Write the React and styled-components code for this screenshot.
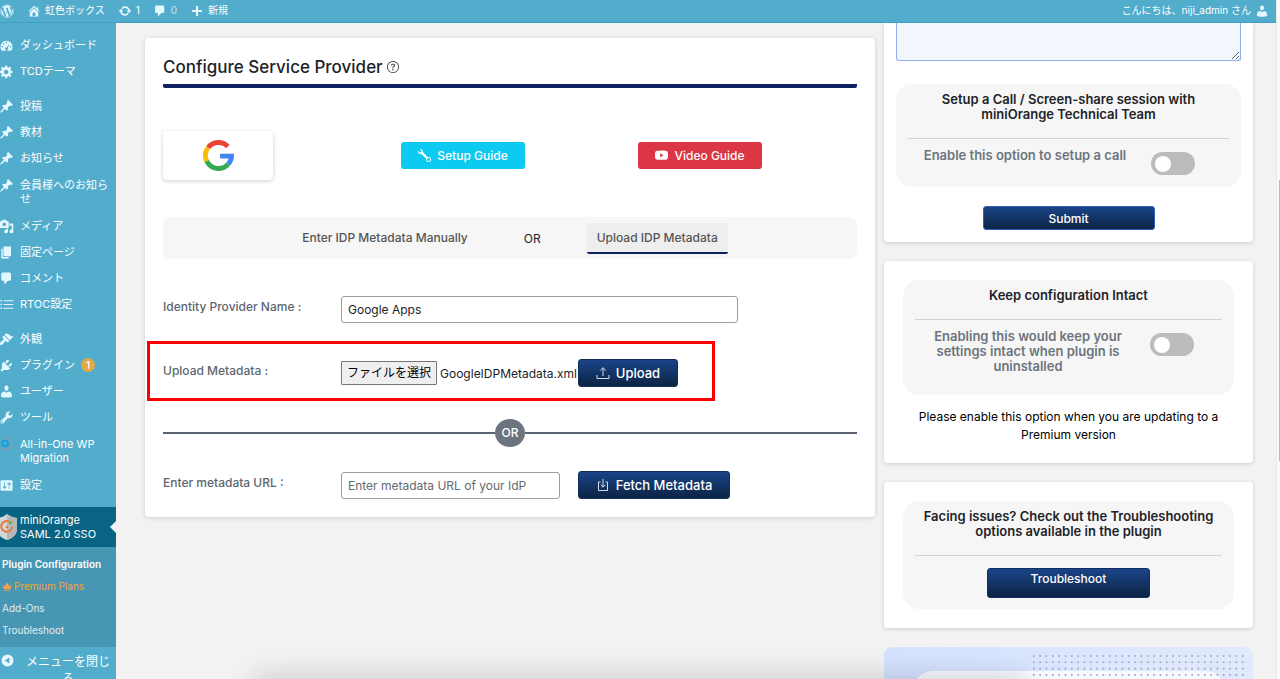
import React, { useState } from 'react';
import styled, { createGlobalStyle, css } from 'styled-components';
import { FaWordpress } from 'react-icons/fa';
import { BsQuestionCircle, BsWrench, BsYoutube } from 'react-icons/bs';

const COLORS = {
    ADMIN: '#52accc',
    ADMIN_LINE: '#3f9ec0',
    CURRENT: '#096484',
    SUBMENU: '#4796b3',
    ICON: '#e5f8ff',
    NAVY: '#0f2260',
    TEXT: '#1d2327',
    LABEL: '#5c6670',
    PAGE: '#f2f2f2',
    PANEL: '#f6f6f6',
    BADGE: '#e1a948',
};

const ICONS = {
    home: 'M16 8.5l1.53 1.53-1.06 1.06L10 4.6l-6.47 6.49-1.06-1.06L10 2.5l4 4v-2h2v4zm-6-2.46l6 5.99V18H4v-5.97zM12 17v-5H8v5h4z',
    update: 'M10.2 3.28c3.53 0 6.43 2.61 6.92 6h2.08l-3.5 4-3.5-4h2.32c-.45-1.97-2.21-3.45-4.32-3.45-1.45 0-2.73.71-3.54 1.78L4.95 5.66C6.23 4.2 8.11 3.28 10.2 3.28zm-.4 13.44c-3.52 0-6.43-2.61-6.92-6H.8l3.5-4c1.17 1.33 2.33 2.67 3.5 4H5.48c.45 1.97 2.21 3.45 4.32 3.45 1.45 0 2.73-.71 3.54-1.78l1.71 1.95c-1.28 1.46-3.15 2.38-5.25 2.38z',
    comment: 'M5 2h9c1.1 0 2 .9 2 2v7c0 1.1-.9 2-2 2h-2l-5 5v-5H5c-1.1 0-2-.9-2-2V4c0-1.1.9-2 2-2z',
    plus: 'M17 8.5v3h-5.5V17h-3v-5.5H3v-3h5.5V3h3v5.5z',
    dashboard: 'M3.76 17h12.48A7.97 7.97 0 0 0 18 11.6a8 8 0 1 0-16 0c0 2 .66 3.9 1.76 5.4zM10 5a1.1 1.1 0 1 1 0 2.2A1.1 1.1 0 0 1 10 5zM6.1 6.6a1.1 1.1 0 1 1 0 2.2 1.1 1.1 0 0 1 0-2.2zm8.6.2l-2.9 6.6a2 2 0 1 1-1.6-.9zM4.5 10.4a1.1 1.1 0 1 1 0 2.2 1.1 1.1 0 0 1 0-2.2zm11 0a1.1 1.1 0 1 1 0 2.2 1.1 1.1 0 0 1 0-2.2z',
    gear: 'M18 12h-2.18c-.17.7-.44 1.35-.81 1.93l1.54 1.54-2.1 2.1-1.54-1.54c-.58.36-1.23.63-1.91.79V19H8v-2.18c-.68-.16-1.33-.43-1.91-.79l-1.54 1.54-2.12-2.12 1.54-1.54c-.36-.58-.63-1.23-.79-1.91H1V9.03h2.17c.16-.7.44-1.35.8-1.94L2.43 5.55l2.1-2.1 1.54 1.54c.58-.37 1.24-.64 1.93-.81V2h3v2.18c.68.16 1.33.43 1.91.79l1.54-1.54 2.12 2.12-1.54 1.54c.36.59.64 1.24.8 1.94H18V12zm-8.5 1.5c1.66 0 3-1.34 3-3s-1.34-3-3-3-3 1.34-3 3 1.34 3 3 3z',
    pin: 'M10.44 3.02l1.82-1.82 6.36 6.35-1.83 1.82c-1.05-.68-2.48-.57-3.41.36l-.75.75c-.92.93-1.04 2.35-.35 3.41l-1.83 1.82-2.41-2.41-2.8 2.79c-.42.42-3.38 2.71-3.8 2.29s1.86-3.39 2.28-3.81l2.79-2.79L4.1 9.36l1.83-1.82c1.05.69 2.48.57 3.4-.36l.75-.75c.93-.92 1.05-2.35.36-3.41z',
    media: 'M13 11V4c0-.55-.45-1-1-1h-1.67L9 1H5L3.67 3H2c-.55 0-1 .45-1 1v7c0 .55.45 1 1 1h10c.55 0 1-.45 1-1zM7 4.5c1.38 0 2.5 1.12 2.5 2.5S8.38 9.5 7 9.5 4.5 8.38 4.5 7 5.62 4.5 7 4.5zM14 6h5v10.5c0 1.38-1.12 2.5-2.5 2.5S14 17.88 14 16.5s1.12-2.5 2.5-2.5c.17 0 .34.02.5.05V9h-3V6zm-4 8.05V13h2v3.5c0 1.38-1.12 2.5-2.5 2.5S7 17.88 7 16.5 8.12 14 9.5 14c.17 0 .34.02.5.05z',
    page: 'M6 15V2h10v13H6zm-1 1h8v2H3V5h2v11z',
    list: 'M2 4h2v2H2zm4 .2h13v1.6H6zM2 9h2v2H2zm4 .2h13v1.6H6zM2 14h2v2H2zm4 .2h13v1.6H6z',
    brush: 'M14.48 11.06L7.41 3.99l1.5-1.5c.5-.56 2.3-.47 3.51.32 1.21.8 1.43 1.28 2.91 2.1 1.18.64 2.45 1.26 4.45.85zm-.71.71L6.7 4.7 4.93 6.47c-.39.39-.39 1.02 0 1.41l1.06 1.06c.39.39.39 1.03 0 1.42-.6.6-1.43 1.11-2.21 1.69-.35.26-.7.53-1.01.84C1.43 14.23.4 16.08 1.4 17.07c.99 1 2.84-.03 4.18-1.36.31-.31.58-.66.85-1.02.57-.78 1.08-1.61 1.69-2.21.39-.39 1.02-.39 1.41 0l1.06 1.06c.39.39 1.02.39 1.41 0z',
    plugin: 'M13.11 4.36L9.87 7.6 8 5.73l3.24-3.24c.35-.34 1.05-.2 1.56.32.52.51.66 1.21.31 1.55zm-8 1.77l.91-1.12 9.01 9.01-1.19.84c-.71.71-2.63 1.16-3.82 1.16H6.14L4.9 17.26c-.59.59-1.54.59-2.12 0-.59-.58-.59-1.53 0-2.12l1.24-1.24v-3.88c0-1.13.4-3.19 1.09-3.89zm7.26 3.97l3.24-3.24c.34-.35 1.04-.21 1.55.31.52.51.66 1.21.31 1.55l-3.24 3.25z',
    user: 'M10 9.25c-2.27 0-2.73-3.44-2.73-3.44C7 4.02 7.82 2 9.97 2c2.16 0 2.98 2.02 2.71 3.81 0 0-.41 3.44-2.68 3.44zm0 2.57L12.72 10c2.39 0 4.52 2.33 4.52 4.53v2.49s-3.65 1.13-7.24 1.13c-3.65 0-7.24-1.13-7.24-1.13v-2.49c0-2.25 1.94-4.48 4.47-4.48z',
    tools: 'M16.68 9.77c-1.34 1.34-3.3 1.67-4.95.99l-5.41 6.52c-.99.99-2.59.99-3.58 0s-.99-2.59 0-3.57l6.52-5.42c-.68-1.65-.35-3.61.99-4.95 1.28-1.28 3.12-1.62 4.72-1.06l-2.89 2.89 2.82 2.82 2.86-2.87c.53 1.58.18 3.39-1.08 4.65zM3.81 16.21c.4.39 1.04.39 1.43 0 .4-.4.4-1.04 0-1.43-.39-.4-1.03-.4-1.43 0-.39.39-.39 1.03 0 1.43z',
    settings: 'M18 16V4c0-.55-.45-1-1-1H3c-.55 0-1 .45-1 1v12c0 .55.45 1 1 1h14c.55 0 1-.45 1-1zM8 11h1c.55 0 1 .45 1 1s-.45 1-1 1H8v1.5c0 .28-.22.5-.5.5s-.5-.22-.5-.5V13H6c-.55 0-1-.45-1-1s.45-1 1-1h1V5.5c0-.28.22-.5.5-.5s.5.22.5.5V11zm5-2h-1c-.55 0-1-.45-1-1s.45-1 1-1h1V5.5c0-.28.22-.5.5-.5s.5.22.5.5V7h1c.55 0 1 .45 1 1s-.45 1-1 1h-1v5.5c0 .28-.22.5-.5.5s-.5-.22-.5-.5V9z',
    collapse: 'M10 2a8 8 0 1 1 0 16 8 8 0 0 1 0-16zm2.5 4L6.5 10l6 4z',
};

const MENU = [
    [
        { icon: 'dashboard', text: 'ダッシュボード' },
        { icon: 'gear', text: 'TCDテーマ' },
    ],
    [
        { icon: 'pin', text: '投稿' },
        { icon: 'pin', text: '教材' },
        { icon: 'pin', text: 'お知らせ' },
        { icon: 'pin', text: '会員様へのお知らせ', tall: true },
        { icon: 'media', text: 'メディア' },
        { icon: 'page', text: '固定ページ' },
        { icon: 'comment', text: 'コメント' },
        { icon: 'list', text: 'RTOC設定' },
    ],
    [
        { icon: 'brush', text: '外観' },
        { icon: 'plugin', text: 'プラグイン', count: 1 },
        { icon: 'user', text: 'ユーザー' },
        { icon: 'tools', text: 'ツール' },
        { icon: 'migration', text: 'All-in-One WP Migration', tall: true },
        { icon: 'settings', text: '設定' },
    ],
];

function DashIcon({ name }) {
    return (
        <IconSvg viewBox="0 0 20 20" aria-hidden="true">
            <path fillRule="evenodd" d={ICONS[name]} />
        </IconSvg>
    );
}

function MigrationIcon() {
    return (
        <IconSvg viewBox="0 0 20 20" aria-hidden="true">
            <path d="M7 1a8 8 0 1 1-4 13" fill="none" stroke="#8b9aa5" strokeWidth="2" />
            <circle cx="8" cy="8.6" r="4" fill="none" stroke="#1b9be0" strokeWidth="2.6" />
        </IconSvg>
    );
}

function ShieldIcon() {
    return (
        <Shield viewBox="0 0 20 28" aria-hidden="true">
            <path d="M7 1c3 2.5 6 3.5 10 4v11c0 5-4 9-10 11C1 25-3 21-3 16V5c4-.5 7-1.5 10-4z" fill="#d4d7d9" />
            <path d="M7 1c3 2.5 6 3.5 10 4v11c0 5-4 9-10 11z" fill="#b3b8bb" />
            <path d="M10.5 9.5a5.4 5.4 0 1 0 1.6 4" fill="none" stroke="#f0763a" strokeWidth="2" />
            <circle cx="7" cy="14" r="1.3" fill="#f0763a" />
            <path d="M8.5 11.5c0-2.5 1.8-3.5 4-3.2 0 2.2-1.6 3.4-4 3.2z" fill="#6db13f" />
        </Shield>
    );
}

function CrownIcon() {
    return (
        <Crown viewBox="0 0 20 18" aria-hidden="true">
            <path d="M1 5l4 4 5-8 5 8 4-4-2 9H3zM3.5 15.5h13v2h-13z" />
        </Crown>
    );
}

function GoogleLogo() {
    return (
        <GoogleSvg viewBox="0 0 48 48" role="img" aria-label="Google">
            <path stroke="#EA4335" d="M7.9 11.8A20.2 20.2 0 0 1 38.5 10" />
            <path stroke="#FBBC05" d="M5.7 32.5A20.2 20.2 0 0 1 7.9 11.8" />
            <path stroke="#34A853" d="M39 37.5A20.2 20.2 0 0 1 5.7 32.5" />
            <path stroke="#4285F4" d="M26.5 25H44.2A20.2 20.2 0 0 1 39 37.5" />
        </GoogleSvg>
    );
}

function UploadIcon() {
    return (
        <LineIcon viewBox="0 0 14 14" aria-hidden="true">
            <path d="M1 9v3.5h12V9M7 10V2M4.2 4.6L7 1.7l2.8 2.9" />
        </LineIcon>
    );
}

function FetchIcon() {
    return (
        <LineIcon viewBox="0 0 14 14" aria-hidden="true">
            <path d="M4.5 4H2.5v8.5h9V4h-2M7 1v8M4.7 6.9L7 9.2l2.3-2.3" />
        </LineIcon>
    );
}

function DotGrid() {
    return (
        <Dots viewBox="0 0 213 30" aria-hidden="true">
            {[2, 8.3, 14.6, 20.9].map((y) => (
                <path key={y} d={`M1 ${y}H213`} strokeDasharray="1.6 4.73" />
            ))}
        </Dots>
    );
}

function Toggle({ label }) {
    const [on, setOn] = useState(false);

    return (
        <Switch type="checkbox" role="switch" aria-label={label} checked={on} onChange={() => setOn(!on)} />
    );
}

function Sidebar() {
    return (
        <Side>
            {MENU.map((group, i) => (
                <MenuGroup key={i}>
                    {group.map((item) => (
                        <li key={item.text}>
                            <MenuLink href="#" $tall={item.tall}>
                                {item.icon === 'migration' ? <MigrationIcon /> : <DashIcon name={item.icon} />}
                                <span>{item.text}</span>
                                {item.count && <Count>{item.count}</Count>}
                            </MenuLink>
                        </li>
                    ))}
                </MenuGroup>
            ))}
            <CurrentLink href="#">
                <ShieldIcon />
                <span>miniOrange SAML 2.0 SSO</span>
            </CurrentLink>
            <Submenu>
                <SubLink href="#" $current>Plugin Configuration</SubLink>
                <SubLink href="#" $premium><CrownIcon />Premium Plans</SubLink>
                <SubLink href="#">Add-Ons</SubLink>
                <SubLink href="#">Troubleshoot</SubLink>
            </Submenu>
            <Collapse type="button">
                <DashIcon name="collapse" />
                <span>メニューを閉じる</span>
            </Collapse>
        </Side>
    );
}

function ServiceProvider() {
    const [name, setName] = useState('Google Apps');

    return (
        <MainCard>
            <Title>Configure Service Provider <BsQuestionCircle /></Title>
            <Guides>
                <LogoBox><GoogleLogo /></LogoBox>
                <GuideLink href="#" $color="#0dcaf0"><BsWrench />Setup Guide</GuideLink>
                <GuideLink href="#" $color="#dc3545"><BsYoutube />Video Guide</GuideLink>
            </Guides>
            <Tabs>
                <Tab type="button">Enter IDP Metadata Manually</Tab>
                <span>OR</span>
                <Tab type="button" $active>Upload IDP Metadata</Tab>
            </Tabs>
            <Row>
                <FieldLabel htmlFor="idp-name">Identity Provider Name :</FieldLabel>
                <TextInput id="idp-name" $width={397} value={name} onChange={(e) => setName(e.target.value)} />
            </Row>
            <Highlight>
                <Row>
                    <FieldLabel htmlFor="idp-file">Upload Metadata :</FieldLabel>
                    <FilePicker>
                        <input id="idp-file" type="file" />
                        <FileButton>ファイルを選択</FileButton>
                        <span>GoogleIDPMetadata.xml</span>
                    </FilePicker>
                    <NavyButton type="button" $width={100}><UploadIcon />Upload</NavyButton>
                </Row>
            </Highlight>
            <OrDivider><span>OR</span></OrDivider>
            <Row>
                <FieldLabel htmlFor="idp-url">Enter metadata URL :</FieldLabel>
                <UrlCell>
                    <TextInput id="idp-url" $width={219} placeholder="Enter metadata URL of your IdP" />
                </UrlCell>
                <NavyButton type="button" $width={152}><FetchIcon />Fetch Metadata</NavyButton>
            </Row>
        </MainCard>
    );
}

function SupportColumn() {
    return (
        <Column>
            <ContactCard>
                <Query aria-label="Query" />
                <Panel>
                    <PanelTitle>Setup a Call / Screen-share session with miniOrange Technical Team</PanelTitle>
                    <Option>
                        <p>Enable this option to setup a call</p>
                        <Toggle label="Enable this option to setup a call" />
                    </Option>
                </Panel>
                <SubmitButton type="submit">Submit</SubmitButton>
            </ContactCard>
            <SideCard>
                <Panel>
                    <PanelTitle>Keep configuration Intact</PanelTitle>
                    <Option $long>
                        <p>Enabling this would keep your settings intact when plugin is uninstalled</p>
                        <Toggle label="Keep configuration Intact" />
                    </Option>
                </Panel>
                <Note>Please enable this option when you are updating to a Premium version</Note>
            </SideCard>
            <SideCard>
                <Panel>
                    <PanelTitle>Facing issues? Check out the Troubleshooting options available in the plugin</PanelTitle>
                    <TroubleButton type="button">Troubleshoot</TroubleButton>
                </Panel>
            </SideCard>
            <Promo>
                <DotGrid />
                <PromoInner />
            </Promo>
        </Column>
    );
}

function App() {
    return (
        <Page>
            <GlobalStyle />
            <Screen>
                <AdminBar>
                    <BarLink href="#" aria-label="WordPress"><FaWordpress /></BarLink>
                    <BarLink href="#"><DashIcon name="home" />虹色ボックス</BarLink>
                    <BarLink href="#"><DashIcon name="update" />1</BarLink>
                    <BarLink href="#" $dim><DashIcon name="comment" />0</BarLink>
                    <BarLink href="#"><DashIcon name="plus" />新規</BarLink>
                    <Account href="#">こんにちは、niji_admin さん<DashIcon name="user" /></Account>
                </AdminBar>
                <Body>
                    <Sidebar />
                    <Content>
                        <ServiceProvider />
                        <SupportColumn />
                    </Content>
                </Body>
            </Screen>
            <ScrollTrack><div /></ScrollTrack>
            <BottomShade />
        </Page>
    );
}

const GlobalStyle = createGlobalStyle`
* {
    box-sizing: border-box;
}

body {
    margin: 0;
    background: ${COLORS.PAGE};
    color: ${COLORS.TEXT};
    font: 12px/15px Inter, 'Noto Sans CJK JP', sans-serif;
}

button, input, textarea {
    font: inherit;
}

a {
    color: inherit;
    text-decoration: none;
}

h1, h2, p, ul {
    margin: 0;
    padding: 0;
    list-style: none;
}
`;

const Page = styled.div`
    display: grid;
    grid-template-columns: minmax(0, 1fr) 4px;
    height: 100vh;
    overflow: hidden;
`;

const Screen = styled.div`
    display: flex;
    flex-direction: column;
    min-height: 0;
`;

const ScrollTrack = styled.div`
    background: #fafafa;
    border-left: 1px solid #e8e8e8;
    padding: 180px 0 0 2px;

    div {
        height: 281px;
        background: #b9b9b9;
    }
`;

const IconSvg = styled.svg`
    flex: none;
    width: 15px;
    height: 15px;
    fill: ${COLORS.ICON};
`;

const AdminBar = styled.header`
    position: relative;
    z-index: 2;
    flex: none;
    display: flex;
    align-items: center;
    gap: 13px;
    height: 23px;
    padding: 0 7px 1px 0;
    background: ${COLORS.ADMIN};
    border-bottom: 1px solid ${COLORS.ADMIN_LINE};
    color: #fff;
    font-size: 10px;
`;

const BarLink = styled.a`
    display: flex;
    align-items: center;
    gap: 4px;
    color: ${(props) => (props.$dim ? '#c4e5f1' : '#fff')};

    > svg:only-child {
        width: 14px;
        height: 14px;
        color: ${COLORS.ICON};
    }
`;

const Account = styled(BarLink)`
    margin-left: auto;
`;

const Body = styled.div`
    flex: 1;
    min-height: 0;
    display: grid;
    grid-template-columns: 116px minmax(0, 1fr);
`;

const Side = styled.nav`
    padding-top: 9px;
    background: ${COLORS.ADMIN};
    color: #fff;
    font-size: 11px;
    line-height: 14px;
`;

const MenuGroup = styled.ul`
    margin-bottom: 9px;
`;

const MenuLink = styled.a`
    display: flex;
    gap: 6px;
    padding: ${(props) => (props.$tall ? 7 : 6)}px 8px ${(props) => (props.$tall ? 7 : 6)}px 0;
    margin-left: -1px;

    svg {
        margin-bottom: -1px;
    }
`;

const Count = styled.b`
    width: 14px;
    border-radius: 7px;
    background: ${COLORS.BADGE};
    font-size: 10px;
    font-weight: 500;
    text-align: center;
`;

const CurrentLink = styled.a`
    position: relative;
    display: flex;
    padding: 6px 8px 6px 0;
    background: ${COLORS.CURRENT};

    &::after {
        content: '';
        position: absolute;
        right: 0;
        top: 14px;
        border: 6px solid transparent;
        border-left: 0;
        border-right-color: ${COLORS.PAGE};
    }
`;

const Shield = styled.svg`
    flex: none;
    width: 20px;
    height: 28px;
`;

const Submenu = styled.div`
    display: flex;
    flex-direction: column;
    gap: 8px;
    padding: 10px 2px;
    background: ${COLORS.SUBMENU};
`;

const SubLink = styled.a`
    display: flex;
    align-items: center;
    gap: 2px;
    color: #e2ecf1;
    font-size: 10px;
    white-space: nowrap;
    ${(props) => props.$current && css`
        color: #fff;
        font-weight: 600;
    `}
    ${(props) => props.$premium && css`
        color: #f5a623;
    `}
`;

const Crown = styled.svg`
    width: 10px;
    height: 9px;
    fill: #f7a14a;
`;

const Collapse = styled.button`
    display: flex;
    width: 100%;
    gap: 10px;
    padding: 6px 5px 6px 0;
    border: 0;
    background: none;
    color: #fff;
    font-size: 12px;
    line-height: 17px;

    span {
        flex: 1;
    }
`;

const Content = styled.main`
    display: grid;
    grid-template-columns: minmax(0, 1fr) 369px;
    align-items: start;
    gap: 9px;
    padding: 0 23px 0 29px;
`;

const Card = styled.section`
    background: #fff;
    border-radius: 4px;
    box-shadow: 0 1px 4px rgba(0, 0, 0, 0.16);
`;

const MainCard = styled(Card)`
    margin-top: 15px;
    padding: 18px;
`;

const Title = styled.h1`
    padding-bottom: 6px;
    border-bottom: 4px solid ${COLORS.NAVY};
    border-radius: 2px;
    font-size: 17px;
    font-weight: 500;
    line-height: 22px;

    svg {
        width: 12px;
        height: 12px;
    }
`;

const Guides = styled.div`
    display: grid;
    grid-template-columns: 238px 237px 1fr;
    align-items: center;
    margin-top: 43px;
`;

const LogoBox = styled.div`
    display: flex;
    align-items: center;
    justify-content: center;
    width: 110px;
    height: 49px;
    border-radius: 4px;
    box-shadow: 0 1px 4px rgba(0, 0, 0, 0.2);
`;

const GoogleSvg = styled.svg`
    width: 31px;
    height: 31px;
    fill: none;
    stroke-width: 7.6;
`;

const GuideLink = styled.a`
    display: flex;
    align-items: center;
    justify-content: center;
    gap: 6px;
    width: 124px;
    height: 27px;
    border-radius: 3px;
    background: ${(props) => props.$color};
    color: #fff;
    font-weight: 500;

    svg {
        width: 13px;
        height: 13px;
    }
`;

const Tabs = styled.div`
    display: flex;
    justify-content: center;
    align-items: center;
    gap: 46px;
    height: 42px;
    margin: 37px 0;
    border-radius: 8px;
    background: ${COLORS.PANEL};
`;

const Tab = styled.button`
    height: 31px;
    padding: 0 10px;
    border: 0;
    border-bottom: 2px solid ${(props) => (props.$active ? COLORS.NAVY : 'transparent')};
    border-radius: 2px;
    background: ${(props) => (props.$active ? '#eee' : 'none')};
    color: #555;
    font-weight: 500;
`;

const Row = styled.div`
    display: flex;
    align-items: center;
`;

const FieldLabel = styled.label`
    flex: none;
    width: 178px;
    padding-bottom: 6px;
    color: ${COLORS.LABEL};
    font-weight: 500;
`;

const TextInput = styled.input`
    width: ${(props) => props.$width}px;
    height: 27px;
    padding: 0 6px;
    border: 1px solid #9a9da1;
    border-radius: 3px;
    background: #fff;
    color: ${COLORS.TEXT};

    &::placeholder {
        color: #646970;
        opacity: 1;
    }
`;

/* red frame around the step that has to be done */
const Highlight = styled.div`
    width: 568px;
    margin: 18px 0 18px -16px;
    padding: 15px 13px 11px;
    border: 3px solid #f00;
`;

const FilePicker = styled.div`
    position: relative;
    display: flex;
    align-items: center;
    gap: 3px;
    width: 237px;
    color: ${COLORS.TEXT};
    white-space: nowrap;

    input {
        position: absolute;
        inset: 0;
        width: 100%;
        opacity: 0;
    }
`;

const FileButton = styled.span`
    flex: none;
    padding: 3px 5px;
    border: 1px solid #767676;
    border-radius: 1px;
    background: #efefef;
    color: #000;
    line-height: 16px;
    text-align: center;
`;

const UrlCell = styled.div`
    width: 237px;
`;

const navy = css`
    border: 1px solid #12305e;
    border-radius: 3px;
    background: linear-gradient(#1a4488, #0d2444);
    color: #fff;
`;

const NavyButton = styled.button`
    ${navy}
    display: flex;
    align-items: center;
    justify-content: center;
    gap: 6px;
    flex: none;
    width: ${(props) => props.$width}px;
    height: 28px;
    padding: 0;
    font-size: 13px;
    font-weight: 500;
`;

const LineIcon = styled.svg`
    width: 14px;
    height: 14px;
    fill: none;
    stroke: #d6deea;
`;

const OrDivider = styled.div`
    display: flex;
    align-items: center;
    margin-bottom: 24px;

    &::before,
    &::after {
        content: '';
        flex: 1;
        height: 2px;
        background: #5b6470;
    }

    span {
        width: 30px;
        border-radius: 50%;
        background: #6c757d;
        color: #fff;
        font-weight: 500;
        line-height: 28px;
        text-align: center;
    }
`;

const Column = styled.aside`
    display: flex;
    flex-direction: column;
    gap: 19px;
`;

const SideCard = styled(Card)`
    padding: 19px;
`;

const ContactCard = styled(Card)`
    display: flex;
    flex-direction: column;
    border-radius: 0 0 4px 4px;
    padding: 0 12px 12px;
`;

const Query = styled.textarea`
    height: 38px;
    margin-bottom: 23px;
    border: 1px solid #8fb0e8;
    border-top: 0;
    border-radius: 0 0 3px 3px;
    background: #f2f6ff;
    resize: vertical;
`;

const Panel = styled.div`
    padding: 8px 12px 11px;
    border-radius: 16px;
    background: ${COLORS.PANEL};
`;

const PanelTitle = styled.h2`
    padding: 0 4px 16px;
    border-bottom: 1px solid #d2d2d2;
    font-size: 13px;
    font-weight: 600;
    line-height: 15px;
    text-align: center;
`;

const Option = styled.div`
    display: flex;
    justify-content: center;
    gap: ${(props) => (props.$long ? 19 : 25)}px;
    min-height: ${(props) => (props.$long ? 64 : 37)}px;
    padding: 9px 18px 0 0;
    color: #6c757d;
    font-size: 13px;
    font-weight: 600;
    text-align: center;

    p {
        max-width: 206px;
    }
`;

const Switch = styled.input`
    appearance: none;
    flex: none;
    width: 44px;
    height: 23px;
    margin: 4px 0 0;
    padding: 4px;
    border-radius: 12px;
    background: #bdbbbb;

    &::before {
        content: '';
        display: block;
        width: 16px;
        height: 16px;
        border-radius: 50%;
        background: #fff;
    }

    &:checked {
        background: #1a4488;
    }

    &:checked::before {
        margin-left: 20px;
    }
`;

const SubmitButton = styled.button`
    ${navy}
    align-self: center;
    width: 172px;
    height: 24px;
    margin-top: 19px;
    border-color: #2f5fb8;
    font-weight: 500;
`;

const Note = styled.p`
    padding: 13px 10px 0;
    color: #000;
    line-height: 18px;
    text-align: center;
`;

const TroubleButton = styled.button`
    ${navy}
    display: block;
    width: 163px;
    margin: 12px auto 0;
    padding: 2px 0 11px;
    font-weight: 500;
`;

const Promo = styled.section`
    height: 200px;
    padding: 7px 8px 0 29px;
    border-radius: 8px;
    background: linear-gradient(90deg, #d5e2ff, #e1e9fb);
`;

const Dots = styled.svg`
    display: block;
    width: 213px;
    height: 30px;
    margin-left: auto;
    stroke: #98a3b8;
    stroke-width: 1.6;
`;

const PromoInner = styled.div`
    height: 160px;
    margin: -13px 20px 0 0;
    border-radius: 20px;
    background: #f8faff;
`;

/* soft edge of the dock below the window */
const BottomShade = styled.div`
    position: fixed;
    left: 20%;
    right: 20%;
    bottom: -20px;
    height: 20px;
    box-shadow: 0 0 28px 2px rgba(0, 0, 0, 0.18);
    pointer-events: none;
`;

export default App;
